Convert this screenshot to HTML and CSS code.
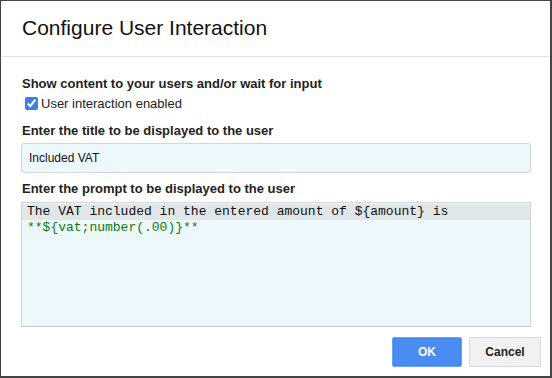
FILE: index.html
```html
<!DOCTYPE html>
<html>
<head>
    <title>Configure User Interaction</title>
    <link rel="stylesheet" href="styles.css">
</head>
<body>
    <div class="dialog">
        <div class="dialog-header">
            <h1 class="dialog-title">Configure User Interaction</h1>
        </div>

        <div class="dialog-body">
            <div class="field-label">Show content to your users and/or wait for input</div>
            <label class="check-row">
                <input type="checkbox" checked>
                <span>User interaction enabled</span>
            </label>

            <div class="field-label">Enter the title to be displayed to the user</div>
            <div class="text-input">Included VAT</div>

            <div class="field-label">Enter the prompt to be displayed to the user</div>
            <div class="code-editor">
                <div class="code-line active">The VAT included in the entered amount of ${amount} is</div>
                <div class="code-line strong">**${vat;number(.00)}**</div>
            </div>
        </div>

        <div class="dialog-footer">
            <button class="btn btn-primary">OK</button>
            <button class="btn">Cancel</button>
        </div>
    </div>
</body>
</html>
```

FILE: styles.css
```css
* {
    margin: 0;
    padding: 0;
    box-sizing: border-box;
}

body {
    background-color: #444;
    font-family: "Liberation Sans", Arial, sans-serif;
    color: #222;
    width: 552px;
    height: 378px;
    overflow: hidden;
}

.dialog {
    background: #fff;
    margin: 1px 2px 2px 1px;
    height: 375px;
    display: flex;
    flex-direction: column;
}

.dialog-header {
    height: 56px;
    border-bottom: 1px solid #e5e5e5;
    display: flex;
    align-items: center;
    padding: 0 21px;
}

.dialog-title {
    font-size: 21px;
    font-weight: normal;
    color: #111;
    padding-bottom: 1px;
}

.dialog-body {
    padding: 19px 19px 0 20px;
}

.field-label {
    font-size: 13px;
    font-weight: bold;
    line-height: 16px;
    padding-left: 1px;
    color: #222;
}

.check-row {
    display: flex;
    align-items: center;
    gap: 3px;
    height: 16px;
    margin: 3px 0 12px 4px;
    font-size: 13px;
    color: #222;
}

.check-row input {
    width: 13px;
    height: 13px;
    margin: 0;
    accent-color: #3d7fe6;
}

.text-input {
    margin: 4px 0 8px;
    height: 30px;
    border: 1px solid #d2d6d8;
    border-radius: 3px;
    background: #edf8fd;
    font-size: 12px;
    line-height: 28px;
    padding-left: 7px;
    color: #111;
}

.code-editor {
    margin-top: 5px;
    height: 125px;
    border: 1px solid #d2d6d8;
    border-bottom-color: #c8cbcd;
    background: #edf8fd;
    padding-top: 1px;
    font-family: "Liberation Mono", "DejaVu Sans Mono", monospace;
    font-size: 13px;
}

.code-line {
    line-height: 16px;
    padding-left: 5px;
    color: #111;
    white-space: pre;
}

.code-line.active {
    background: #e1e6e9;
}

.code-line.strong {
    color: #0c7a0c;
}

.dialog-footer {
    display: flex;
    justify-content: flex-end;
    gap: 7px;
    padding: 10px 9px 0 0;
}

.btn {
    height: 30px;
    width: 72px;
    border: 1px solid #d8d8d8;
    border-radius: 2px;
    background: #f1f1f1;
    color: #222;
    font-family: "Liberation Sans", Arial, sans-serif;
    font-size: 12px;
    font-weight: bold;
}

.btn-primary {
    width: 70px;
    background: #4b8cf2;
    border-color: #6fa5f7;
    color: #fff;
    box-shadow: inset 0 0 0 1px #4384ea;
}
```
